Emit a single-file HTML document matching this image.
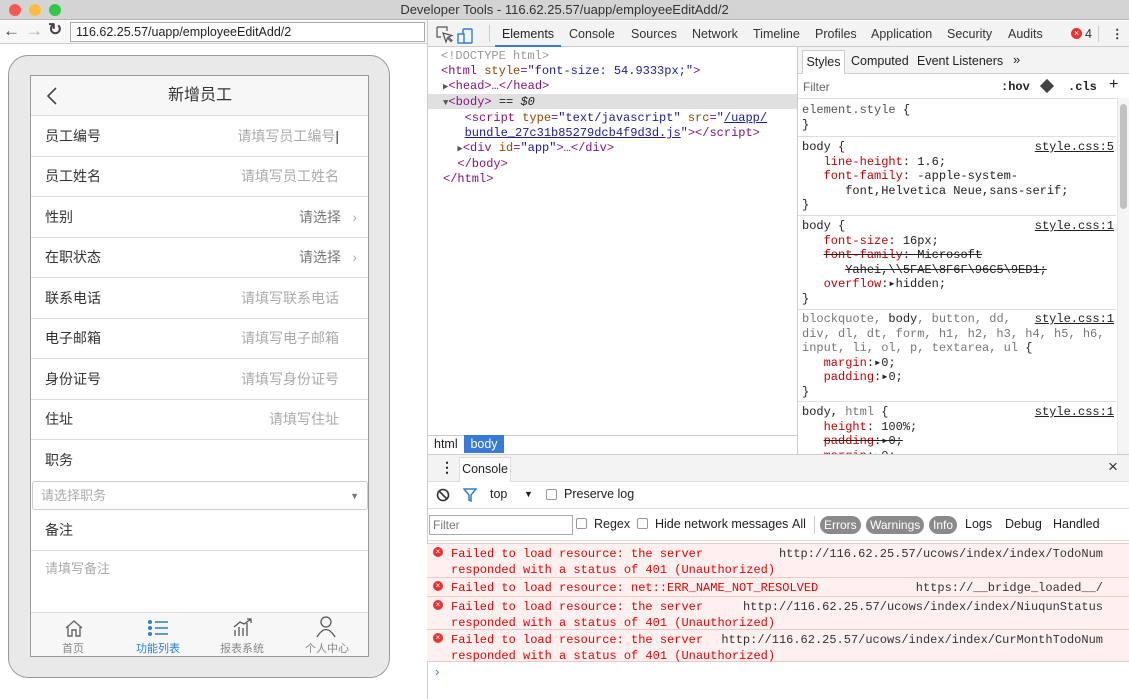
<!DOCTYPE html>
<html><head><meta charset="utf-8"><style>
*{box-sizing:border-box;margin:0;padding:0}
body{width:1129px;height:699px;overflow:hidden;background:#fff;font-family:"Liberation Sans","Noto Sans CJK SC",sans-serif;font-size:12px;color:#222;position:relative}
.abs{position:absolute}
.mono{font-family:"Liberation Mono","DejaVu Sans Mono",monospace;font-size:12px}
.title{left:0;top:0;width:1129px;height:20px;background:#d4d4d4;border-bottom:1px solid #b5b5b5;text-align:center;line-height:20px;font-size:13px;color:#333}
.dot{top:4px;width:12px;height:12px;border-radius:6px}
.row{position:absolute;left:0;width:338px;height:41px;border-bottom:1px solid #ddd;font-size:14px;line-height:40px}
.row .l{position:absolute;left:14px;color:#333}
.row .r{position:absolute;right:30px;color:#aaa}
.tab{position:absolute;top:0;height:26px;line-height:26px;font-size:12.5px;color:#333}
.css{position:absolute;left:802px;font-family:"Liberation Mono",monospace;font-size:12px;line-height:14.5px;color:#222;white-space:pre}
.p{color:#c80000}
.src{position:absolute;right:0;text-decoration:underline;color:#222}
.err{position:absolute;left:427px;width:702px;background:#fff0f0;border-top:1px solid #f5c6c6;color:#e00;font-family:"Liberation Mono",monospace;font-size:12px;line-height:16px;white-space:pre}
.err .u{position:absolute;right:26px;top:0;color:#333}
.x{position:absolute;left:6px;top:3px;width:10px;height:10px;border-radius:5px;background:#e33;color:#fff;font-size:8px;line-height:10px;text-align:center;font-family:"Liberation Sans"}
.pill{position:absolute;top:516px;height:18px;line-height:18px;border-radius:9px;background:#8a8a8a;color:#fff;padding:0 4px;font-size:12px}
.cb{position:absolute;width:11px;height:11px;border:1px solid #999;border-radius:2px;background:#fff}
</style></head><body>
<div class="abs title">Developer Tools - 116.62.25.57/uapp/employeeEditAdd/2</div>
<div class="abs dot" style="left:9px;background:#fc5753"></div>
<div class="abs dot" style="left:29px;background:#fdbc40"></div>
<div class="abs dot" style="left:49px;background:#33c748"></div>
<!-- browser toolbar -->
<div class="abs" style="left:0;top:21px;width:427px;height:23px;background:#f7f7f7;border-bottom:1px solid #ccc"></div>
<div class="abs" style="left:3px;top:21px;font-size:17px;color:#444;font-weight:bold">&#8592;</div>
<div class="abs" style="left:26px;top:21px;font-size:17px;color:#aaa;font-weight:bold">&#8594;</div>
<div class="abs" style="left:48px;top:20px;font-size:17px;color:#444;font-weight:bold">&#8635;</div>
<div class="abs" style="left:70px;top:22px;width:355px;height:20px;border:1px solid #aaa;background:#fff;font-size:12.5px;line-height:18px;padding-left:5px">116.62.25.57/uapp/employeeEditAdd/2</div>
<!-- phone -->
<div class="abs" style="left:8px;top:55px;width:382px;height:623px;background:#e9e9e9;border:1px solid #999;border-radius:20px"></div>
<div class="abs" style="left:30px;top:75px;width:339px;height:582px;border:1px solid #999;background:#fff;overflow:hidden">
 <div class="abs" style="left:0;top:0;width:338px;height:40px;background:#f7f7f7;border-bottom:1px solid #ddd;text-align:center;line-height:40px;font-size:16px;color:#333">新增员工</div>
 <svg class="abs" style="left:14px;top:10px" width="14" height="20"><path d="M11 2 L3 10 L11 18" stroke="#444" stroke-width="1.6" fill="none"/></svg>
 <div class="row" style="top:40px"><span class="l">员工编号</span><span class="r">请填写员工编号<span style="color:#333">|</span></span></div>
 <div class="row" style="top:80px"><span class="l">员工姓名</span><span class="r">请填写员工姓名</span></div>
 <div class="row" style="top:121px"><span class="l">性别</span><span class="r" style="right:28px;color:#777">请选择</span><span style="position:absolute;right:12px;color:#aaa">&#8250;</span></div>
 <div class="row" style="top:161px"><span class="l">在职状态</span><span class="r" style="right:28px;color:#777">请选择</span><span style="position:absolute;right:12px;color:#aaa">&#8250;</span></div>
 <div class="row" style="top:202px"><span class="l">联系电话</span><span class="r">请填写联系电话</span></div>
 <div class="row" style="top:242px"><span class="l">电子邮箱</span><span class="r">请填写电子邮箱</span></div>
 <div class="row" style="top:283px"><span class="l">身份证号</span><span class="r">请填写身份证号</span></div>
 <div class="row" style="top:323px"><span class="l">住址</span><span class="r">请填写住址</span></div>
 <div class="row" style="top:364px;border-bottom:none"><span class="l">职务</span></div>
 <div class="abs" style="left:1px;top:405px;width:336px;height:29px;border:1px solid #ccc;border-radius:3px;font-size:13px;line-height:27px;color:#aaa;padding-left:8px">请选择职务<span style="position:absolute;right:8px;top:1px;font-size:9px;color:#777">&#9660;</span></div>
 <div class="row" style="top:434px"><span class="l">备注</span></div>
 <div class="abs" style="left:14px;top:482px;font-size:13px;color:#aaa">请填写备注</div>
 <div class="abs" style="left:0;top:536px;width:338px;height:46px;background:#f7f7f7;border-top:1px solid #ddd;font-size:11px;color:#888">
  <svg class="abs" style="left:33px;top:6px" width="20" height="19"><path d="M2 9 L10 2 L18 9 M4 8 V17 H8 V11 H12 V17 H16 V8" stroke="#666" stroke-width="1.4" fill="none"/></svg>
  <div class="abs" style="left:31px;top:27px">首页</div>
  <svg class="abs" style="left:116px;top:6px" width="22" height="18"><circle cx="3" cy="3" r="2" fill="#2a7fd4"/><circle cx="3" cy="9" r="2" fill="#2a7fd4"/><circle cx="3" cy="15" r="2" fill="#2a7fd4"/><path d="M8 3H21M8 9H21M8 15H21" stroke="#2a7fd4" stroke-width="1.6"/></svg>
  <div class="abs" style="left:105px;top:27px;color:#2a7fd4">功能列表</div>
  <svg class="abs" style="left:201px;top:4px" width="22" height="20"><path d="M3 19V13M7 19V10M11 19V11M15 19V6M2 10 L8 5 L12 7 L19 2 M15 2H19V6" stroke="#555" stroke-width="1.3" fill="none"/></svg>
  <div class="abs" style="left:189px;top:27px">报表系统</div>
  <svg class="abs" style="left:285px;top:3px" width="20" height="22"><circle cx="10" cy="6" r="5" stroke="#555" stroke-width="1.3" fill="none"/><path d="M1 21 Q10 6 19 21" stroke="#555" stroke-width="1.3" fill="none"/></svg>
  <div class="abs" style="left:274px;top:27px">个人中心</div>
 </div>
</div>
<!-- devtools -->
<div class="abs" style="left:427px;top:20px;width:1px;height:679px;background:#ccc"></div>
<div class="abs" style="left:428px;top:21px;width:701px;height:26px;background:#f3f3f3;border-bottom:1px solid #ccc"></div>
<svg class="abs" style="left:436px;top:26px" width="40" height="18"><path d="M1 1H11V5M1 1V11H5M7 7L10 16L11.5 12L15 15.5L16 14.5L12.5 11L16 9.5Z" stroke="#555" stroke-width="1.2" fill="none"/><rect x="27" y="3" width="9" height="14" rx="1" stroke="#2a7fd4" stroke-width="1.4" fill="none"/><rect x="22" y="8" width="6" height="9" stroke="#2a7fd4" stroke-width="1.4" fill="#f3f3f3"/></svg>
<div class="abs" style="left:489px;top:25px;width:1px;height:17px;background:#ccc"></div>
<div style="position:absolute;left:428px;top:21px">
 <div class="tab" style="left:67px;width:66px;text-align:center;color:#222;border-bottom:2px solid #3879d9">Elements</div>
 <div class="tab" style="left:141px">Console</div>
 <div class="tab" style="left:203px">Sources</div>
 <div class="tab" style="left:264px">Network</div>
 <div class="tab" style="left:325px">Timeline</div>
 <div class="tab" style="left:387px">Profiles</div>
 <div class="tab" style="left:443px">Application</div>
 <div class="tab" style="left:519px">Security</div>
 <div class="tab" style="left:580px">Audits</div>
 <div class="abs" style="left:643px;top:7px;width:11px;height:11px;border-radius:6px;background:#e33;color:#fff;font-size:9px;line-height:11px;text-align:center">×</div>
 <div class="tab" style="left:657px">4</div>
 <div class="abs" style="left:670px;top:5px;width:1px;height:16px;background:#ccc"></div>
 <div class="tab" style="left:683px;font-weight:bold">&#8942;</div>
</div>
<!-- elements tree -->
<div class="abs mono" style="left:441px;top:49px;line-height:15px;color:#881280;white-space:pre"><span style="color:#999">&lt;!DOCTYPE html&gt;</span>
&lt;html <span style="color:#994500">style</span>=<span style="color:#1a1aa6">"font-size: 54.9333px;"</span>&gt;</div>
<div class="abs" style="left:428px;top:94px;width:369px;height:15px;background:#e0e0e0"></div>
<div class="abs mono" style="left:443px;top:79px;line-height:15px;color:#881280;white-space:pre"><span style="color:#555;font-size:9px">&#9654;</span>&lt;head&gt;…&lt;/head&gt;
<span style="color:#555;font-size:9px">&#9660;</span>&lt;body&gt; <span style="color:#222">== <i>$0</i></span>
   &lt;script <span style="color:#994500">type</span>=<span style="color:#1a1aa6">"text/javascript"</span> <span style="color:#994500">src</span>=<span style="color:#1a1aa6">"<u>/uapp/</u></span>
   <u style="color:#1a1aa6">bundle_27c31b85279dcb4f9d3d.js</u><span style="color:#1a1aa6">"</span>&gt;&lt;/script&gt;
  <span style="color:#555;font-size:9px">&#9654;</span>&lt;div <span style="color:#994500">id</span>=<span style="color:#1a1aa6">"app"</span>&gt;…&lt;/div&gt;
  &lt;/body&gt;
&lt;/html&gt;</div>
<div class="abs" style="left:428px;top:435px;width:369px;height:1px;background:#ccc"></div>
<div class="abs" style="left:434px;top:437px;font-size:12.5px">html</div>
<div class="abs" style="left:464px;top:435px;width:40px;height:18px;background:#3879d9;color:#fff;font-size:12.5px;text-align:center;line-height:18px">body</div>
<div class="abs" style="left:797px;top:47px;width:1px;height:408px;background:#ccc"></div>
<!-- styles pane -->
<div class="abs" style="left:798px;top:47px;width:331px;height:27px;background:#f3f3f3;border-bottom:1px solid #ccc"></div>
<div class="abs" style="left:802px;top:50px;width:43px;height:24px;background:#fff;border:1px solid #ccc;border-bottom:none;line-height:22px;text-align:center;font-size:12.5px">Styles</div>
<div class="abs" style="left:851px;top:54px;font-size:12.5px">Computed</div>
<div class="abs" style="left:917px;top:54px;font-size:12.5px">Event Listeners</div>
<div class="abs" style="left:1013px;top:52px;font-size:13px">»</div>
<div class="abs" style="left:803px;top:80px;color:#666;font-size:12px">Filter</div>
<div class="abs mono" style="left:1001px;top:80px;font-weight:bold">:hov</div>
<div class="abs" style="left:1042px;top:81px;width:10px;height:10px;background:#444;transform:rotate(45deg)"></div>
<div class="abs mono" style="left:1068px;top:80px;font-weight:bold">.cls</div>
<div class="abs" style="left:1109px;top:76px;font-size:16px">+</div>
<div class="abs" style="left:798px;top:98px;width:318px;height:1px;background:#ddd"></div>
<div class="abs" style="left:1117px;top:98px;width:12px;height:357px;background:#f5f5f5;border-left:1px solid #e5e5e5"></div>
<div class="abs" style="left:1120px;top:104px;width:7px;height:105px;background:#c1c1c1;border-radius:4px"></div>
<div class="css" style="top:103px"><span style="color:#555">element.style</span> {
}</div>
<div class="abs" style="left:798px;top:136px;width:318px;height:1px;background:#ddd"></div>
<div class="css" style="top:140px;width:312px">body {<span class="src">style.css:5</span>
   <span class="p">line-height</span>: 1.6;
   <span class="p">font-family</span>: -apple-system-
      font,Helvetica Neue,sans-serif;
}</div>
<div class="abs" style="left:798px;top:215px;width:318px;height:1px;background:#ddd"></div>
<div class="css" style="top:219px;width:312px">body {<span class="src">style.css:1</span>
   <span class="p">font-size</span>: 16px;
   <s><span class="p">font-family</span>: Microsoft</s>
      <s>Yahei,\\5FAE\8F6F\96C5\9ED1;</s>
   <span class="p">overflow</span>:▸hidden;
}</div>
<div class="abs" style="left:798px;top:309px;width:318px;height:1px;background:#ddd"></div>
<div class="css" style="top:312px;width:312px;color:#777">blockquote, <span style="color:#222">body</span>, button, dd,<span class="src">style.css:1</span>
div, dl, dt, form, h1, h2, h3, h4, h5, h6,
input, li, ol, p, textarea, ul <span style="color:#222">{</span>
<span style="color:#222">   <span class="p">margin</span>:▸0;
   <span class="p">padding</span>:▸0;
}</span></div>
<div class="abs" style="left:798px;top:401px;width:318px;height:1px;background:#ddd"></div>
<div class="css" style="top:405px;width:312px;height:50px;overflow:hidden">body, <span style="color:#777">html</span> {<span class="src">style.css:1</span>
   <span class="p">height</span>: 100%;
   <s><span class="p">padding</span>:▸0;</s>
   <s><span class="p">margin</span>:▸0;</s></div>
<!-- console drawer -->
<div class="abs" style="left:428px;top:454px;width:701px;height:28px;background:#f3f3f3;border-top:1px solid #ccc;border-bottom:1px solid #ddd"></div>
<div class="abs" style="left:440px;top:459px;font-weight:bold;font-size:14px">&#8942;</div>
<div class="abs" style="left:459px;top:457px;width:52px;height:25px;background:#fff;border:1px solid #ddd;border-bottom:none;line-height:23px;text-align:center;font-size:12.5px">Console</div>
<div class="abs" style="left:1108px;top:457px;font-size:17px;color:#333">×</div>
<div class="abs" style="left:428px;top:482px;width:701px;height:27px;border-bottom:1px solid #ddd"></div>
<svg class="abs" style="left:436px;top:488px" width="14" height="14"><circle cx="7" cy="7" r="5.5" stroke="#333" stroke-width="1.6" fill="none"/><path d="M3 3L11 11" stroke="#333" stroke-width="1.6"/></svg>
<svg class="abs" style="left:463px;top:488px" width="14" height="14"><path d="M1 1H13L8 7V13L6 12V7Z" stroke="#2a7fd4" stroke-width="1.5" fill="none"/></svg>
<div class="abs" style="left:490px;top:487px;font-size:12.5px">top</div>
<div class="abs" style="left:524px;top:489px;font-size:9px">&#9660;</div>
<div class="cb" style="left:546px;top:489px"></div>
<div class="abs" style="left:564px;top:487px;font-size:12.5px">Preserve log</div>
<div class="abs" style="left:428px;top:509px;width:701px;height:32px;border-bottom:1px solid #ddd"></div>
<div class="abs" style="left:429px;top:515px;width:144px;height:20px;border:1px solid #aaa;font-size:12px;line-height:18px;padding-left:3px;color:#777">Filter</div>
<div class="cb" style="left:576px;top:518px"></div>
<div class="abs" style="left:594px;top:517px;font-size:12.5px">Regex</div>
<div class="cb" style="left:637px;top:518px"></div>
<div class="abs" style="left:655px;top:517px;font-size:12.5px">Hide network messages</div>
<div class="abs" style="left:792px;top:517px;font-size:12.5px">All</div>
<div class="abs" style="left:814px;top:516px;width:1px;height:18px;background:#ccc"></div>
<div class="pill" style="left:820px">Errors</div>
<div class="pill" style="left:866px">Warnings</div>
<div class="pill" style="left:929px">Info</div>
<div class="abs" style="left:965px;top:517px;font-size:12.5px">Logs</div>
<div class="abs" style="left:1005px;top:517px;font-size:12.5px">Debug</div>
<div class="abs" style="left:1053px;top:517px;font-size:12.5px">Handled</div>
<div class="err" style="top:543px;height:34px;padding:2px 0 0 24px"><span class="x">×</span>Failed to load resource: the server
responded with a status of 401 (Unauthorized)<span class="u" style="top:2px">http://116.62.25.57/ucows/index/index/TodoNum</span></div>
<div class="err" style="top:577px;height:19px;padding:2px 0 0 24px"><span class="x">×</span>Failed to load resource: net::ERR_NAME_NOT_RESOLVED<span class="u" style="top:2px">https://__bridge_loaded__/</span></div>
<div class="err" style="top:596px;height:33px;padding:2px 0 0 24px"><span class="x">×</span>Failed to load resource: the server
responded with a status of 401 (Unauthorized)<span class="u" style="top:2px">http://116.62.25.57/ucows/index/index/NiuqunStatus</span></div>
<div class="err" style="top:629px;height:33px;padding:2px 0 0 24px;border-bottom:1px solid #f5c6c6"><span class="x">×</span>Failed to load resource: the server
responded with a status of 401 (Unauthorized)<span class="u" style="top:2px">http://116.62.25.57/ucows/index/index/CurMonthTodoNum</span></div>
<div class="abs" style="left:435px;top:664px;color:#2a7fd4;font-size:13px">›</div>
</body></html>
